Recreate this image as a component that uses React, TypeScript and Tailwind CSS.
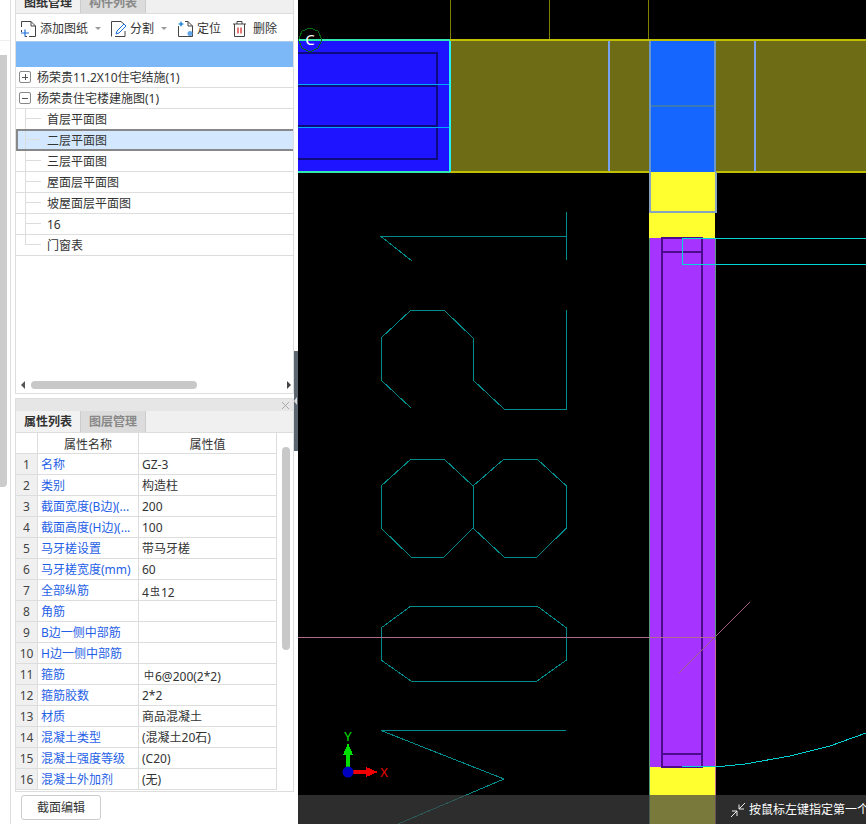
const font = { fontFamily: '"Noto Sans", "Noto Sans CJK SC", sans-serif' };

const treeItems = ["首层平面图", "二层平面图", "三层平面图", "屋面层平面图", "坡屋面层平面图", "16", "门窗表"];

const props: [string, React.ReactNode][] = [
  ["名称", "GZ-3"],
  ["类别", "构造柱"],
  ["截面宽度(B边)(...", "200"],
  ["截面高度(H边)(...", "100"],
  ["马牙槎设置", "带马牙槎"],
  ["马牙槎宽度(mm)", "60"],
  ["全部纵筋", <>4<span className="text-[10px] align-[2px] mx-px">虫</span>12</>],
  ["角筋", ""],
  ["B边一侧中部筋", ""],
  ["H边一侧中部筋", ""],
  ["箍筋", <><span className="text-[10px] align-[2px] ml-[2px] mr-px">中</span>6@200(2*2)</>],
  ["箍筋胶数", "2*2"],
  ["材质", "商品混凝土"],
  ["混凝土类型", "(混凝土20石)"],
  ["混凝土强度等级", "(C20)"],
  ["混凝土外加剂", "(无)"],
];

function PageIcon({ children }: { children: React.ReactNode }) {
  return (
    <svg width="17" height="18" viewBox="0 0 17 18" fill="none" className="shrink-0">
      <path d="M1.5 7V1.5H11L15.5 6V16.5H9" stroke="#444" strokeWidth="1" />
      <path d="M11 1.5V6H15.5" stroke="#444" strokeWidth="1" />
      {children}
    </svg>
  );
}

function Caret() {
  return <span className="ml-[7px] w-0 h-0 border-x-[3px] border-x-transparent border-t-[3px] border-t-[#999]" />;
}

function Toolbar() {
  return (
    <div className="h-[27px] pt-[2px] flex items-center pl-[4px] text-[12px] text-[#333] shrink-0">
      <PageIcon>
        <path d="M1.5 10v2M5 16.5h2" stroke="#444" />
        <path d="M5 9.5v7M1 13h8" stroke="#1a6fd8" strokeWidth="1.2" />
      </PageIcon>
      <span className="ml-[3px]">添加图纸</span>
      <Caret />
      <span className="ml-[9px] flex">
        <svg width="17" height="18" viewBox="0 0 17 18" fill="none">
          <path d="M1.5 16.5V1.5H11L15 5M15 11V16.5H5" stroke="#444" />
          <path d="M6 14l1-3 7-7 2 2-7 7z" stroke="#1a6fd8" fill="#fff" />
        </svg>
      </span>
      <span className="ml-[3px]">分割</span>
      <Caret />
      <span className="ml-[10px] flex">
        <svg width="17" height="18" viewBox="0 0 17 18" fill="none">
          <path d="M1.5 16.5V6M8 1.5H11L15.5 6V16.5H1.5" stroke="#444" />
          <path d="M11 1.5V6H15.5" stroke="#444" />
          <path d="M4 1l1 2 2 1-2 1-1 2-1-2-2-1 2-1z" fill="#2b8be0" />
          <circle cx="13" cy="13.5" r="2.5" fill="#5fa5e8" />
        </svg>
      </span>
      <span className="ml-[3px]">定位</span>
      <span className="ml-[11px] flex">
        <svg width="15" height="18" viewBox="0 0 15 18" fill="none">
          <path d="M1 4h13M5 4V1.5h5V4M2.5 4v12.5h10V4" stroke="#444" />
          <path d="M6 7.5v6M9 7.5v6" stroke="#d92020" strokeWidth="1.2" />
        </svg>
      </span>
      <span className="ml-[6px]">删除</span>
    </div>
  );
}

function ExpandBox({ open }: { open: boolean }) {
  return (
    <span className="w-[12px] h-[12px] border border-[#888] rounded-[2px] flex items-center justify-center ml-[3px] mr-[6px] shrink-0 relative">
      <span className="w-[6px] h-px bg-[#555]" />
      {!open && <span className="absolute w-px h-[6px] bg-[#555]" />}
    </span>
  );
}

function TreeChild({ label, index }: { label: string; index: number }) {
  const selected = index === 1;
  const last = index === treeItems.length - 1;
  return (
    <div
      className={`flex items-center shrink-0 ${
        selected ? "bg-[#d3e8ff] border-y-2 border-l-2 border-[#888] -mt-px h-[22px]" : "h-[21px] border-b border-[#ddd]"
      }`}
    >
      <div className={`h-full flex flex-col shrink-0 w-[16px] ${selected ? "ml-[7px]" : "ml-[9px]"}`}>
        <div className="h-1/2 border-l border-b border-[#ddd]" />
        {!last && <div className="h-1/2 border-l border-[#ddd]" />}
      </div>
      <span className="ml-[6px] pt-[2px] text-[12px] text-[#333] leading-none">{label}</span>
    </div>
  );
}

function TabStrip({ first, second }: { first: string; second: string }) {
  return (
    <div className="h-[22px] flex bg-[#f0f0f0] border-b border-[#ddd] text-[12px] font-bold shrink-0">
      <div className="w-[65px] bg-[#f2f2f2] border-r border-[#ccc] flex items-center justify-center text-[#333]">{first}</div>
      <div className="w-[65px] bg-[#dcdcdc] border-r border-[#ccc] flex items-center justify-center text-[#888]">{second}</div>
    </div>
  );
}

function DrawingPanel() {
  return (
    <div className="h-[394px] flex flex-col border-x border-b border-[#ddd] shrink-0">
      <div className="h-[14px] overflow-hidden flex flex-col justify-end shrink-0">
        <TabStrip first="图纸管理" second="构件列表" />
      </div>
      <Toolbar />
      <div className="h-[26px] bg-[#7cb7f8] border-t border-[#aac8ea] shrink-0" />
      <div className="h-[21px] flex items-center border-b border-[#ddd] text-[12px] text-[#333] shrink-0">
        <ExpandBox open={false} />
        <span className="pt-[2px] leading-none">杨荣贵11.2X10住宅结施(1)</span>
      </div>
      <div className="h-[21px] flex items-center border-b border-[#ddd] text-[12px] text-[#333] shrink-0">
        <ExpandBox open />
        <span className="pt-[2px] leading-none">杨荣贵住宅楼建施图(1)</span>
      </div>
      {treeItems.map((t, i) => (
        <TreeChild key={t} label={t} index={i} />
      ))}
      <div className="flex-1" />
      <div className="h-[16px] flex items-center pl-[5px] shrink-0">
        <span className="w-0 h-0 border-y-[4px] border-y-transparent border-r-[4px] border-r-[#555]" />
        <span className="ml-[6px] w-[166px] h-[8px] rounded-full bg-[#c8c8c8]" />
        <span className="ml-[90px] w-0 h-0 border-y-[4px] border-y-transparent border-l-[4px] border-l-[#444]" />
      </div>
    </div>
  );
}

function PropertyPanel() {
  return (
    <div className="flex-1 flex flex-col mt-[4px] min-h-0">
      <div className="h-[394px] flex flex-col border-x border-b border-[#ddd] shrink-0">
        <div className="h-[13px] bg-[#e6e6e6] border-t border-[#ddd] flex justify-end items-center pr-[3px] shrink-0">
          <svg width="9" height="9" viewBox="0 0 9 9" stroke="#aaa">
            <path d="M1 1l7 7M8 1l-7 7" />
          </svg>
        </div>
        <TabStrip first="属性列表" second="图层管理" />
        <div className="flex flex-1 min-h-0 overflow-hidden">
          <div className="w-[261px] shrink-0 text-[12px]">
            <div className="h-[21px] overflow-hidden grid grid-cols-[22px_101px_138px] border-b border-[#ddd] text-[#333]">
              <div className="border-r border-[#ddd]" />
              <div className="border-r border-[#ddd] text-center leading-[24px]">属性名称</div>
              <div className="border-r border-[#ddd] text-center leading-[24px]">属性值</div>
            </div>
            {props.map(([name, value], i) => (
              <div key={i} className="h-[21px] overflow-hidden grid grid-cols-[22px_101px_138px] border-b border-[#ddd] leading-[22px]">
                <div className="bg-[#f0f0f0] border-r border-[#ddd] text-center text-[#444]">{i + 1}</div>
                <div className="border-r border-[#ddd] pl-[3px] text-[#1f5fe6] whitespace-nowrap overflow-hidden">{name}</div>
                <div className="border-r border-[#ddd] pl-[3px] text-[#333]">{value}</div>
              </div>
            ))}
          </div>
          <div className="flex-1 pl-[5px] pt-[14px]">
            <div className="w-[8px] h-[203px] rounded-full bg-[#c8c8c8]" />
          </div>
        </div>
      </div>
      <div className="flex pl-[6px] pt-[3px]">
        <button className="w-[80px] h-[25px] bg-white border border-[#ccc] rounded-[3px] text-[12px] text-[#333]">截面编辑</button>
      </div>
    </div>
  );
}

function Polyline({ points, stroke = "#008a8a" }: { points: string; stroke?: string }) {
  return <polyline points={points} fill="none" stroke={stroke} strokeWidth="1" />;
}

function CadCanvas() {
  return (
    <svg width="568" height="824" viewBox="298 0 568 824" shapeRendering="crispEdges" className="block">
      <rect x="298" y="0" width="568" height="824" fill="#000" />
      {/* top grid ticks */}
      <path d="M450.5 0V40M549.5 0V40M648.5 0V40" stroke="#808000" />
      {/* beam */}
      <rect x="451" y="41" width="415" height="131" fill="#6f6c16" />
      <path d="M450 40H866M450 172H866" stroke="#c0c000" strokeWidth="2" />
      <path d="M609 41V171M755 41V171" stroke="#7aa0f0" strokeWidth="2" />
      {/* blue slab */}
      <rect x="298" y="41" width="152" height="131" fill="#1f14ff" />
      <path d="M298 53H437V158.5H298M298 86H437M298 126H437" fill="none" stroke="#0e0a80" strokeWidth="2" />
      <path d="M298 84H450M298 127.5H450" stroke="#00a8ff" />
      <path d="M298 40H450M298 172H450" stroke="#30e8b0" strokeWidth="2" />
      <path d="M450 41V172" stroke="#20f0f0" strokeWidth="2" />
      {/* column blocks */}
      <rect x="649" y="41" width="66" height="131" fill="#1566ff" />
      <path d="M649 106H715" stroke="#3a7ab8" strokeWidth="2" />
      <path d="M649.5 41V172M715 41V172" stroke="#6b97c8" strokeWidth="2" />
      <rect x="649" y="172" width="66" height="66" fill="#ffff30" />
      <path d="M649.5 172V212H715.5V172" fill="none" stroke="#86a4c0" strokeWidth="2" />
      <rect x="649" y="238" width="66" height="529" fill="#a633ff" />
      <rect x="649" y="767" width="66" height="57" fill="#ffff30" />
      <path d="M649 238V824" stroke="#4f9a70" />
      <path d="M715 238V640" stroke="#5a9a80" />
      <path d="M715 640V824" stroke="#c07090" />
      <path d="M662 237.5V766.5H702V237.5ZM662 251.5H702M662 754H702" fill="none" stroke="#4b0b8c" strokeWidth="2" />
      <polyline points="866,238.5 682,238.5 682,264.5 866,264.5" fill="none" stroke="#00d8d8" />
      {/* teal linework */}
      <Polyline points="566.5,212 566.5,260" />
      <Polyline points="566,236.5 381,236.5 412,261" />
      <Polyline points="411,408 381,380 381,338 411,310 444,310 473,338 473,380 504,409 566.5,409 566.5,310" />
      <Polyline points="411,459 444,459 473,486 473,528 444,557 411,557 381,528 381,486 411,459" />
      <Polyline points="473,486 504,459 537,459 566.5,486 566.5,528 537,557 504,557 473,528" />
      <Polyline points="411,606 537,606 566.5,628 566.5,660 537,681 411,681 381,660 381,628 411,606" />
      <Polyline points="566,730.5 381,730.5 504,779 398,824" />
      <path d="M298 637.5H715" stroke="#b06a8a" />
      <line x1="679" y1="673" x2="750" y2="602" stroke="#a06080" />
      <Polyline points="682,767 720,766.5 745,764 790,756 830,746 866,733" stroke="#00d0d0" />
      {/* axis marker C */}
      <polygon points="310,28 318,31 322,40 318,48 310,52 302,48 298.5,40 302,31" fill="none" stroke="#006a10" />
      <text x="310" y="45" textAnchor="middle" fontSize="15" fill="#fff" style={font} shapeRendering="auto">C</text>
      {/* coordinate triad */}
      <rect x="346" y="755" width="4" height="17" fill="#00e000" />
      <polygon points="348,743 343,755 353,755" fill="#00e000" />
      <rect x="350" y="770" width="17" height="4" fill="#f00000" />
      <polygon points="378,772 366,767 366,777" fill="#f00000" />
      <circle cx="348" cy="772" r="5.5" fill="#0000c0" shapeRendering="auto" />
      <text x="348" y="741" textAnchor="middle" fontSize="13" fill="#00e000" style={font} shapeRendering="auto">Y</text>
      <text x="384" y="777" textAnchor="middle" fontSize="13" fill="#f00000" style={font} shapeRendering="auto">X</text>
    </svg>
  );
}

export default function App() {
  return (
    <div className="w-[866px] h-[824px] flex overflow-hidden bg-white" style={font}>
      <aside className="w-[298px] flex shrink-0">
        <div className="w-[15px] shrink-0 flex">
          <div className="w-[11px] border-r border-[#ddd] flex flex-col shrink-0">
            <div className="h-[41px] border-b border-[#eee] shrink-0" />
            <div className="mt-[14px] w-[7px] h-[432px] bg-[#cccccc] rounded-br-[4px]" />
          </div>
        </div>
        <div className="w-[279px] flex flex-col shrink-0">
          <DrawingPanel />
          <PropertyPanel />
        </div>
        <div className="w-[4px] flex flex-col shrink-0">
          <div className="mt-[351px] h-[100px] bg-[#5b6670] flex items-center">
            <span className="w-0 h-0 border-y-[4px] border-y-transparent border-r-[3px] border-r-[#ddd]" />
          </div>
        </div>
      </aside>
      <main className="relative flex-1">
        <CadCanvas />
        <div className="absolute left-0 right-0 bottom-0 h-[29px] bg-[rgba(64,64,64,0.7)] flex items-center overflow-hidden">
          <div className="ml-[432px] flex items-center whitespace-nowrap text-[12px] leading-none text-white">
            <svg width="16" height="16" viewBox="0 0 16 16" fill="none" stroke="#eee" className="shrink-0">
              <path d="M15 1L9 7M9 2.5V7H14M1 15L7 9M2 9H7V14" />
            </svg>
            <span className="ml-[3px]">按鼠标左键指定第一个</span>
          </div>
        </div>
      </main>
    </div>
  );
}
